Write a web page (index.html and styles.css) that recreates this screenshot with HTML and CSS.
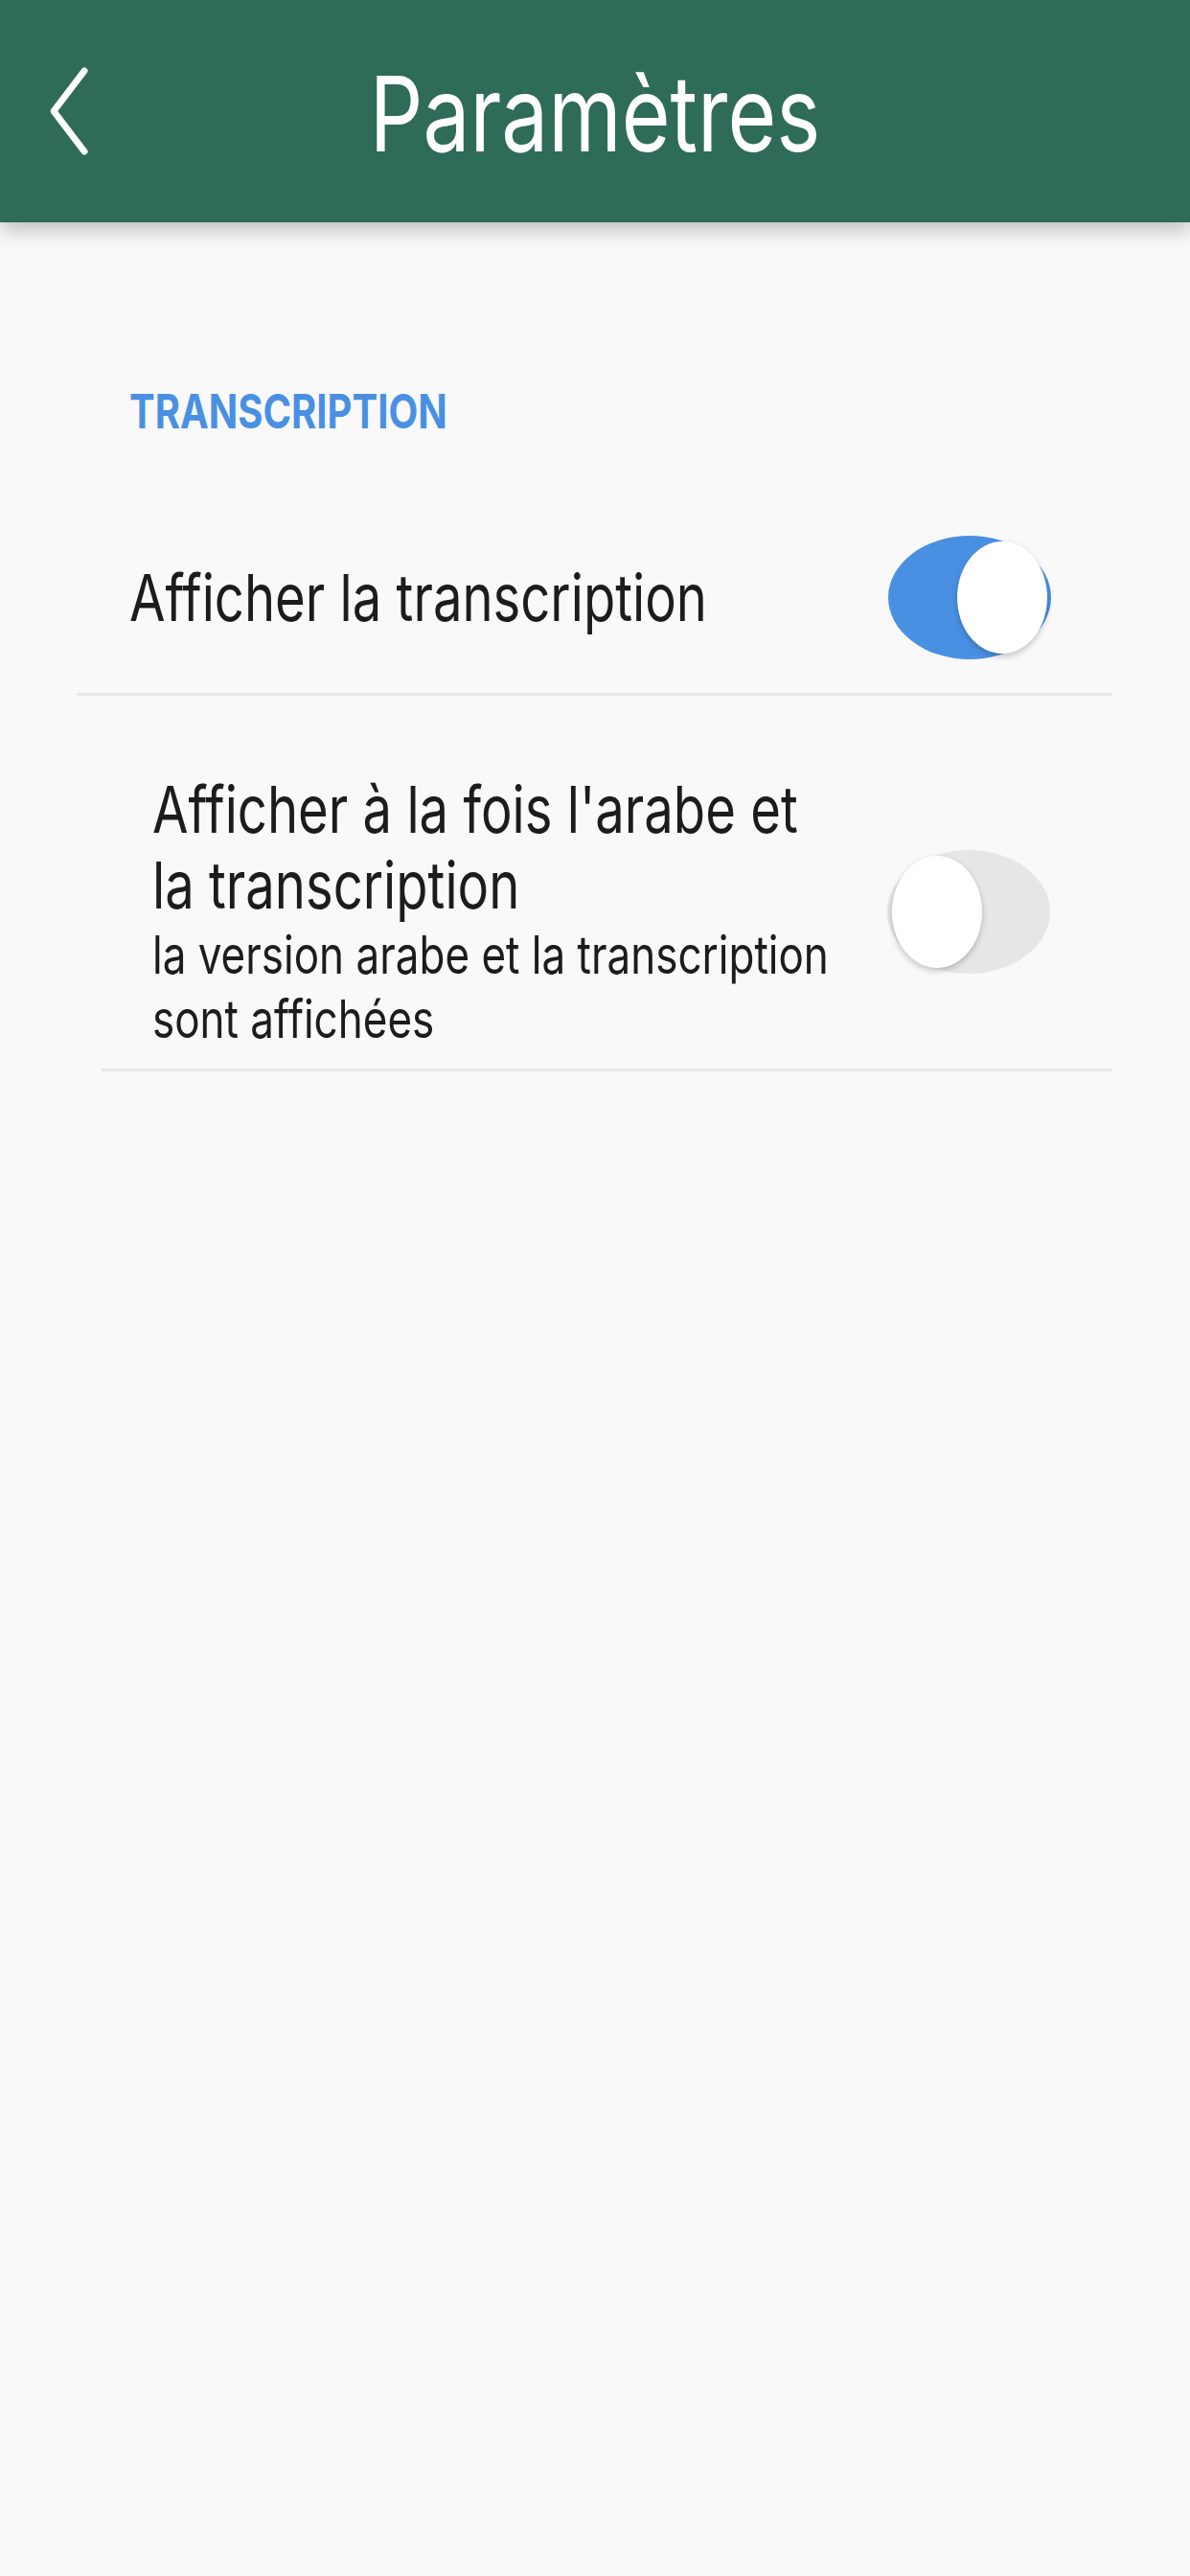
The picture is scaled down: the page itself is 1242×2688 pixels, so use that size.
FILE: index.html
```html
<!DOCTYPE html>
<html lang="fr">
<head>
  <meta charset="UTF-8">
  <meta name="viewport" content="width=device-width, initial-scale=1.0">
  <title>Paramètres</title>
  <link rel="stylesheet" href="styles.css">
</head>
<body>
  <header class="topbar">
    <a href="#" class="back" aria-label="Retour">
      <svg width="48" height="96" viewBox="0 0 48 96">
        <polyline points="40,6 8,48 40,90" fill="none" stroke="#fff" stroke-width="7" stroke-linecap="round" stroke-linejoin="round"/>
      </svg>
    </a>
    <h1 class="title">Paramètres</h1>
  </header>

  <main class="settings">
    <h2 class="section-title">TRANSCRIPTION</h2>

    <div class="row">
      <div class="row-text">
        <div class="row-label">Afficher la transcription</div>
      </div>
      <span class="switch on"><span class="knob"></span></span>
    </div>

    <div class="row nested">
      <div class="row-text">
        <div class="row-label">Afficher à la fois l'arabe et la transcription</div>
        <div class="row-sub">la version arabe et la transcription sont affichées</div>
      </div>
      <span class="switch"><span class="knob"></span></span>
    </div>
  </main>
</body>
</html>
```

FILE: styles.css
```css
* {
  margin: 0;
  padding: 0;
  box-sizing: border-box;
}

html, body {
  min-height: 100vh;
  background-color: #f9f9f9;
  font-family: Inter, "Liberation Sans", sans-serif;
  color: #1c1c1c;
}

/* the screen is drawn narrower than wide: text gets squeezed the same way */
.title,
.section-title,
.row-label,
.row-sub {
  transform: scaleX(0.8);
  transform-origin: left top;
}

.topbar {
  position: relative;
  height: 232px;
  background-color: #2e6b58;
  display: flex;
  align-items: center;
  justify-content: center;
  box-shadow: 0 6px 22px rgba(0, 0, 0, 0.28);
  z-index: 1;
}

.back {
  position: absolute;
  left: 48px;
  top: 68px;
  display: block;
  line-height: 0;
}

.title {
  color: #fff;
  font-size: 109px;
  font-weight: 400;
  line-height: 1;
  padding-top: 4px;
  transform-origin: center;
}

.settings {
  padding: 167px 0 0 80px;
}

.section-title {
  color: #4a90e2;
  font-size: 50px;
  font-weight: 700;
  line-height: 60px;
  margin-left: 55px;
  margin-bottom: 63px;
}

.row {
  display: flex;
  align-items: center;
  justify-content: space-between;
  padding: 37px 63px 35px 55px;
  margin-right: 82px;
  border-bottom: 3px solid #e6e6e6;
}

.row.nested {
  margin-left: 26px;
  padding: 79px 64px 18px 53px;
}

.row-text {
  width: 715px;
  flex-shrink: 0;
}

.row-label,
.row-sub {
  width: 894px;
}

.row-label {
  font-size: 68px;
  line-height: 79px;
}

.row-sub {
  font-size: 55px;
  line-height: 67px;
}

.switch {
  position: relative;
  flex-shrink: 0;
  width: 170px;
  height: 129px;
  border-radius: 85px / 64.5px;
  background-color: #e6e6e6;
}

.switch.on {
  background-color: #4a90e2;
}

.knob {
  position: absolute;
  top: 6px;
  left: 5px;
  width: 94px;
  height: 117px;
  border-radius: 50%;
  background-color: #fff;
  box-shadow: 0 3px 6px rgba(0, 0, 0, 0.22);
}

.switch.on .knob {
  left: auto;
  right: 4px;
}
```
